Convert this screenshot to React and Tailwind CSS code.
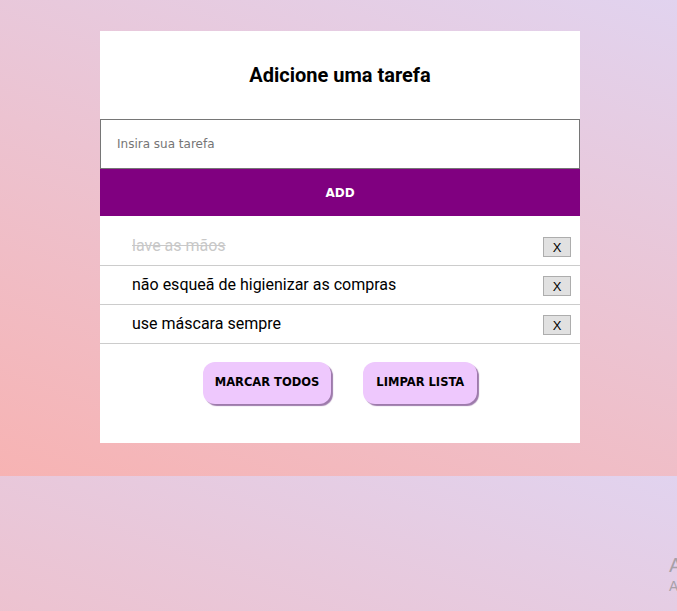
import React from "react";

const items = [
  { text: "lave as mãos", done: true },
  { text: "não esqueã de higienizar as compras", done: false },
  { text: "use máscara sempre", done: false },
];

export default function App() {
  return (
    <div className="relative h-[611px] w-full overflow-hidden bg-[linear-gradient(20deg,#f7b3b3,#e1d3ef)] bg-[length:100%_476px] bg-repeat">
      <div className="ml-[100px] w-[480px] pt-[31px]">
        <div className="bg-white pb-[39px]">
          <h1 className="pt-[30px] h-[58px] text-center text-[20px] leading-[28px] font-bold text-black font-['Roboto',sans-serif]">
            Adicione uma tarefa
          </h1>
          <input
            className="mt-[30px] block h-[50px] w-full border border-[#767676] bg-white px-[16px] text-[12px] text-black outline-none placeholder:text-[#757575] font-['DejaVu_Sans',sans-serif]"
            placeholder="Insira sua tarefa"
          />
          <button className="block h-[47px] w-full bg-[#800080] text-[12px] font-bold text-white font-['DejaVu_Sans',sans-serif]">
            ADD
          </button>
          <ul className="mt-[11px]">
            {items.map((it) => (
              <li
                key={it.text}
                className="flex h-[39px] items-center justify-between border-b border-[#cccccc] pl-[32px] pr-[9px]"
              >
                <span
                  className={
                    "text-[16px] font-['Roboto',sans-serif] " +
                    (it.done ? "text-[#c8c8c8] line-through" : "text-black")
                  }
                >
                  {it.text}
                </span>
                <button className="mt-[2px] flex h-[20px] w-[28px] items-center justify-center border border-[#adadad] bg-[#e1e1e1] text-[13px] leading-none text-black font-['Liberation_Sans',sans-serif]">
                  X
                </button>
              </li>
            ))}
          </ul>
          <div className="mt-[18px] flex justify-center gap-[32px]">
            <button className="h-[42px] rounded-[12px] bg-[#eec8fd] px-[12px] text-[11.5px] font-bold text-black shadow-[2px_2px_1px_#9d7aab] font-['DejaVu_Sans',sans-serif]">
              MARCAR TODOS
            </button>
            <button className="h-[42px] rounded-[12px] bg-[#eec8fd] px-[13px] text-[11.5px] font-bold text-black shadow-[2px_2px_1px_#9d7aab] font-['DejaVu_Sans',sans-serif]">
              LIMPAR LISTA
            </button>
          </div>
        </div>
      </div>
      <div className="absolute left-[669px] top-[553px] whitespace-nowrap font-['Liberation_Sans',sans-serif] text-[#a8a0a8]">
        <div className="text-[20px] leading-[24px]">Ativar o Windows</div>
        <div className="text-[14px] leading-[18px]">Acesse Configurações para ativar o Windows.</div>
      </div>
    </div>
  );
}
